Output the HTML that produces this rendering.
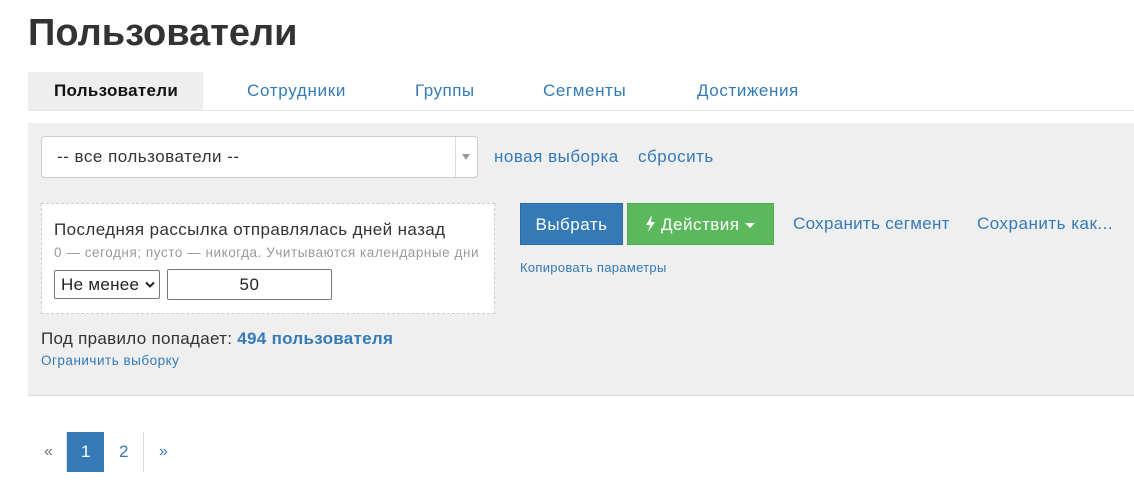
<!DOCTYPE html>
<html><head><meta charset="utf-8"><style>
*{margin:0;padding:0;box-sizing:border-box}
body{width:1134px;height:483px;background:#fff;font-family:"Liberation Sans",sans-serif;color:#333;position:relative;overflow:hidden}
.a{position:absolute;white-space:nowrap;letter-spacing:0.5px}
.l{color:#337ab7}
</style></head><body>
<div class="a" style="left:28px;top:12px;font-size:38px;font-weight:bold;color:#333;letter-spacing:0">Пользователи</div>
<div class="a" style="left:28px;top:72px;width:175px;height:38px;background:#eee"></div>
<div class="a" style="left:28px;top:110px;width:1106px;height:1px;background:#e6e6e6"></div>
<div class="a" style="left:54px;top:81px;font-size:17px;font-weight:bold;color:#111;letter-spacing:0.3px">Пользователи</div>
<div class="a l" style="left:247px;top:81px;font-size:17px;letter-spacing:0.7px">Сотрудники</div>
<div class="a l" style="left:415px;top:81px;font-size:17px;letter-spacing:0.5px">Группы</div>
<div class="a l" style="left:543px;top:81px;font-size:17px;letter-spacing:0.6px">Сегменты</div>
<div class="a l" style="left:697px;top:81px;font-size:17px;letter-spacing:0.6px">Достижения</div>

<div class="a" style="left:28px;top:123px;width:1106px;height:273px;background:#efefef;border-bottom:1px solid #ddd"></div>
<div class="a" style="left:41px;top:136px;width:437px;height:42px;background:#fff;border:1px solid #ccc;border-radius:4px"></div>
<div class="a" style="left:455px;top:137px;width:1px;height:40px;background:#ddd"></div>
<div class="a" style="left:462px;top:154px;width:0;height:0;border-left:4px solid transparent;border-right:4px solid transparent;border-top:6px solid #999"></div>
<div class="a" style="left:57px;top:147px;font-size:17px;color:#333">-- все пользователи --</div>
<div class="a l" style="left:494px;top:147px;font-size:17px">новая выборка</div>
<div class="a l" style="left:638px;top:147px;font-size:17px">сбросить</div>

<div class="a" style="left:41px;top:203px;width:454px;height:111px;background:#fff;border:1px dashed #ccc"></div>
<div class="a" style="left:54px;top:220px;font-size:17px;color:#333;letter-spacing:0.4px">Последняя рассылка отправлялась дней назад</div>
<div class="a" style="left:54px;top:245px;font-size:13.5px;color:#999;letter-spacing:0.55px">0 — сегодня; пусто — никогда. Учитываются календарные дни</div>
<div class="a" style="left:54px;top:270px;width:106px;height:29px;border:1px solid #767676;border-radius:2px;background:#fff;font-size:17px;padding:4px 0 0 6px;color:#222;letter-spacing:0.3px">Не менее<svg style="position:absolute;right:4px;top:10px" width="10" height="7" viewBox="0 0 10 7"><path d="M1 1.5 5 5.5 9 1.5" stroke="#222" stroke-width="2" fill="none"/></svg></div>
<div class="a" style="left:167px;top:269px;width:165px;height:31px;border:1px solid #767676;border-radius:2px;background:#fff;font-size:17px;text-align:center;padding-top:5px;color:#222">50</div>

<div class="a" style="left:520px;top:203px;width:103px;height:42px;background:#337ab7;border:1px solid #2e6da4;color:#fff;font-size:17px;text-align:center;padding-top:11px">Выбрать</div>
<div class="a" style="left:627px;top:203px;width:147px;height:42px;background:#5cb85c;border:1px solid #4cae4c;color:#fff;font-size:17px;padding:11px 0 0 17px"><svg width="11" height="17" viewBox="0 0 11 17" style="vertical-align:-2px;margin-right:5px"><path d="M7 0 1 10h4l-2 7 7-10H6z" fill="#fff"/></svg>Действия <span style="display:inline-block;width:0;height:0;border-left:5px solid transparent;border-right:5px solid transparent;border-top:5px solid #fff;vertical-align:middle"></span></div>
<div class="a l" style="left:793px;top:214px;font-size:17px;letter-spacing:0.3px">Сохранить сегмент</div>
<div class="a l" style="left:977px;top:214px;font-size:17px;letter-spacing:0.5px">Сохранить как...</div>
<div class="a l" style="left:520px;top:260px;font-size:13px;letter-spacing:0.3px">Копировать параметры</div>

<div class="a" style="left:41px;top:329px;font-size:17px;color:#333;letter-spacing:0.3px">Под правило попадает: <b class="l">494 пользователя</b></div>
<div class="a l" style="left:41px;top:353px;font-size:13.5px">Ограничить выборку</div>

<div class="a" style="left:66px;top:432px;width:1px;height:40px;background:#ddd"></div>
<div class="a" style="left:143px;top:432px;width:1px;height:40px;background:#ddd"></div>
<div class="a" style="left:67px;top:432px;width:37px;height:40px;background:#337ab7"></div>
<div class="a" style="left:44px;top:443px;font-size:16px;color:#777">«</div>
<div class="a" style="left:81px;top:442px;font-size:17px;color:#fff">1</div>
<div class="a l" style="left:119px;top:442px;font-size:17px">2</div>
<div class="a l" style="left:159px;top:443px;font-size:16px">»</div>
</body></html>
